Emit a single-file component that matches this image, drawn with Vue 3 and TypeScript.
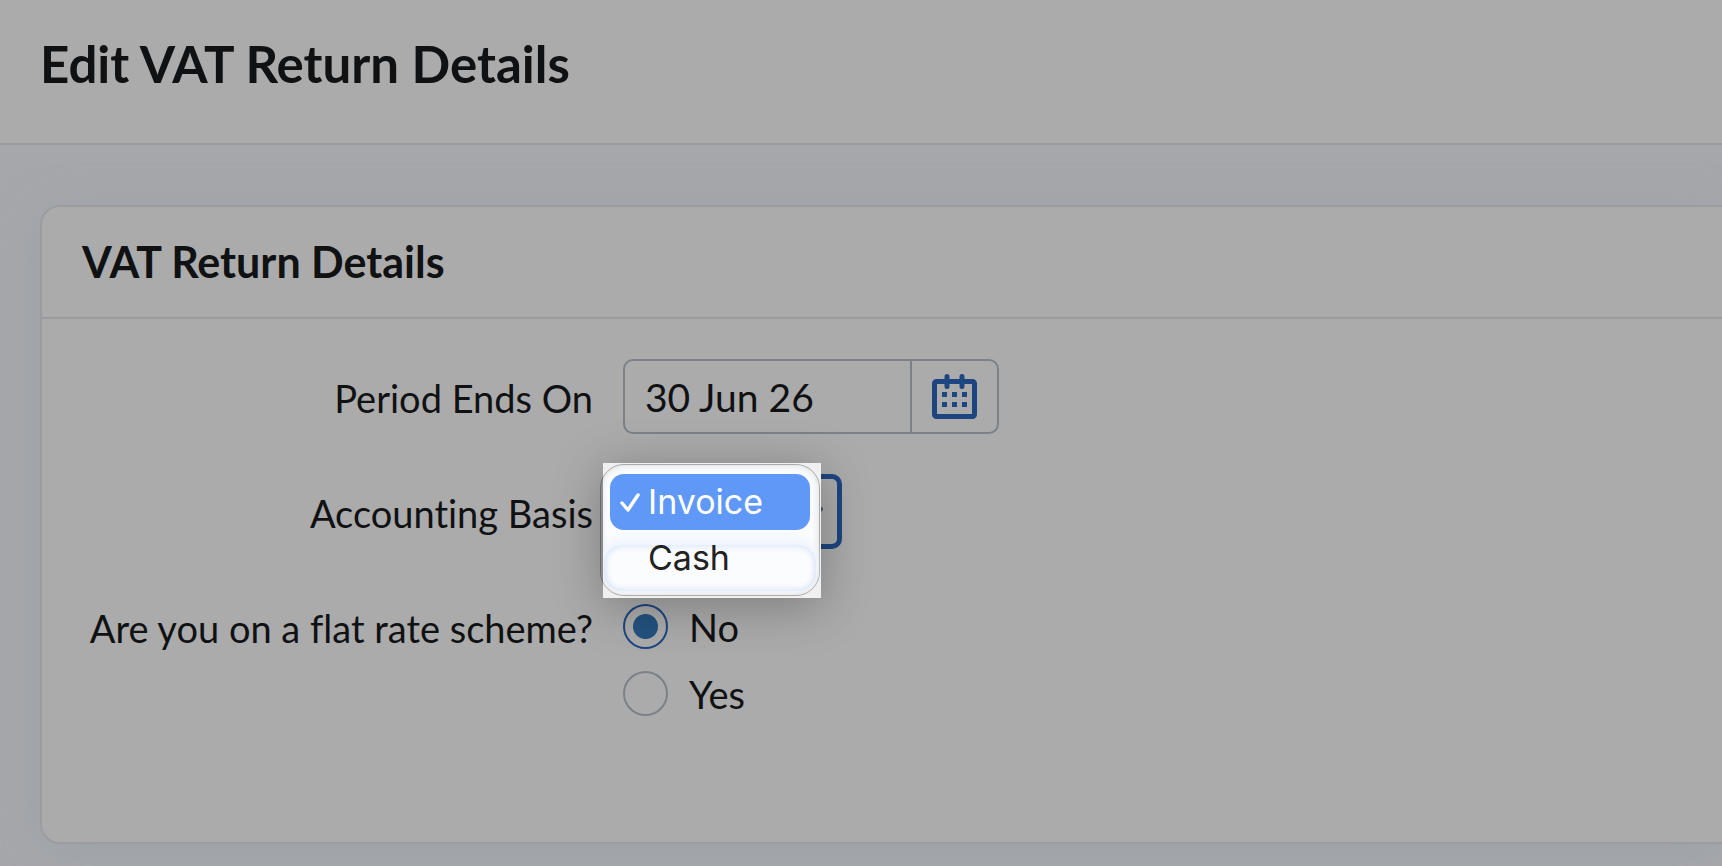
<script setup lang="ts">
import { ref } from 'vue'

type Basis = 'Invoice' | 'Cash'

const bases: Basis[] = ['Invoice', 'Cash']
const periodEnd = ref('30 Jun 26')
const basis = ref<Basis>('Invoice')
const flatRate = ref('No')
const menuOpen = ref(true)

function choose(option: Basis) {
  basis.value = option
  menuOpen.value = false
}
</script>

<template>
  <div class="page">
    <header class="page-header">
      <h1>Edit VAT Return Details</h1>
    </header>

    <main>
      <form class="card" @submit.prevent>
        <div class="card-header">
          <h2>VAT Return Details</h2>
        </div>

        <div class="fields">
          <label class="label" for="period-end">Period Ends On</label>
          <div class="date-field">
            <input id="period-end" v-model="periodEnd" type="text" autocomplete="off" />
            <button class="calendar" type="button" aria-label="Choose date">
              <svg width="45" height="45" viewBox="0 0 45 45" aria-hidden="true">
                <rect x="2.5" y="7.5" width="40" height="35" rx="2" fill="none" stroke="currentColor" stroke-width="5" />
                <path d="M15 2.5v10M30 2.5v10" fill="none" stroke="currentColor" stroke-width="5" stroke-linecap="round" />
                <path d="M10 18h5v5h-5zM20 18h5v5h-5zM30 18h5v5h-5zM10 28h5v5h-5zM20 28h5v5h-5zM30 28h5v5h-5z" fill="currentColor" />
              </svg>
            </button>
          </div>

          <label class="label" for="basis">Accounting Basis</label>
          <div class="select-field" :class="{ open: menuOpen }">
            <select id="basis" v-model="basis" @mousedown.prevent="menuOpen = !menuOpen">
              <option v-for="option in bases" :key="option">{{ option }}</option>
            </select>
            <svg class="chevron" width="26" height="16" viewBox="0 0 26 16" aria-hidden="true">
              <path d="M2 2l11 11L24 2" fill="none" stroke="currentColor" stroke-width="4" stroke-linecap="round" />
            </svg>
            <div v-if="menuOpen" class="spotlight">
              <div class="menu" role="listbox" aria-label="Accounting Basis">
                <button
                  v-for="option in bases"
                  :key="option"
                  type="button"
                  role="option"
                  class="option"
                  :class="{ selected: option === basis }"
                  :aria-selected="option === basis"
                  @click="choose(option)"
                >
                  <svg class="tick" width="20" height="20" viewBox="0 0 20 20" aria-hidden="true">
                    <path v-if="option === basis" d="M2 11l6 7L18 3" fill="none" stroke="currentColor" stroke-width="3.4" stroke-linecap="round" stroke-linejoin="round" />
                  </svg>
                  {{ option }}
                </button>
              </div>
            </div>
          </div>

          <div id="flat-rate" class="label">Are you on a flat rate scheme?</div>
          <div class="radios" role="radiogroup" aria-labelledby="flat-rate">
            <label v-for="answer in ['No', 'Yes']" :key="answer" class="radio">
              <input v-model="flatRate" type="radio" name="flat-rate" :value="answer" />
              <span>{{ answer }}</span>
            </label>
          </div>
        </div>
      </form>
    </main>
  </div>
</template>

<style>
body {
  margin: 0;
  background: #a6a7ab;
}
</style>

<style scoped>
.page {
  min-height: 100vh;
  overflow: hidden;
  color: #101113;
  font-family: Lato, "Liberation Sans", sans-serif;
  font-size: 38px;
  font-variant-ligatures: none;
  line-height: 48px;
}

*,
*::before,
*::after {
  box-sizing: border-box;
}

.page-header {
  padding: 34px 40px 49px;
  background: #ababab;
  border-bottom: 2px solid #9b9ca0;
}

h1,
h2 {
  margin: 0;
  font-weight: 700;
}

h1 {
  font-size: 51px;
  line-height: 60px;
}

h2 {
  font-size: 43px;
  line-height: 50px;
}

main {
  padding: 60px 0 22px 40px;
}

.card {
  background: #ababab;
  border: 2px solid #9b9ca0;
  border-right: 0;
  border-radius: 20px 0 0 20px;
  box-shadow: 0 6px 40px rgba(145, 160, 168, 0.55);
}

.card-header {
  padding: 30px 40px;
  border-bottom: 2px solid #9b9ca0;
}

.fields {
  display: grid;
  grid-template-columns: 511px 1fr;
  column-gap: 30px;
  row-gap: 40px;
  padding: 40px 40px 115px;
}

.label {
  height: 75px;
  line-height: 78px;
  text-align: right;
  white-space: nowrap;
}

.date-field {
  display: flex;
  width: 376px;
  height: 75px;
  border: 2px solid #7b8186;
  border-radius: 10px;
}

input,
select,
button {
  margin: 0;
  color: inherit;
  font: inherit;
}

.date-field input {
  flex: 1;
  min-width: 0;
  padding: 0 20px;
  font-size: 39px;
  background: none;
  border: 0;
  outline: 0;
}

.calendar {
  display: grid;
  place-items: center;
  width: 87px;
  padding: 0;
  color: #1d4681;
  background: none;
  border: 0;
  border-left: 2px solid #7b8186;
}

.select-field {
  position: relative;
  width: 219px;
  height: 75px;
}

/* Dimmed edge of the menu, left of the undimmed area */
.select-field.open::before {
  position: absolute;
  top: -10px;
  left: -23px;
  z-index: 1;
  width: 60px;
  height: 132px;
  background: #a2a2a2;
  border: 1px solid #777;
  border-radius: 24px;
  content: "";
}

select {
  width: 100%;
  height: 100%;
  padding: 0 20px;
  appearance: none;
  background: none;
  border: 5px solid #1d4681;
  border-radius: 10px;
  outline: 0;
}

.chevron {
  position: absolute;
  top: 33px;
  right: 19px;
  color: #4d555c;
}

/* Undimmed area around the open menu */
.spotlight {
  position: absolute;
  top: -11px;
  left: -20px;
  z-index: 1;
  width: 218px;
  overflow: hidden;
  background: #f0f0f0;
  box-shadow: 0 8px 50px rgba(0, 0, 0, 0.28);
}

.menu {
  position: relative;
  display: flex;
  flex-direction: column;
  margin: 1px 1px 2px -3px;
  padding: 9px;
  background: #fbfcfd;
  border: 1px solid #a9a9a9;
  border-radius: 24px;
  box-shadow: inset 0 0 6px 1px #dfe1e3;
}

.menu::before {
  position: absolute;
  right: 3px;
  bottom: 4px;
  left: 3px;
  height: 46px;
  border-radius: 18px;
  box-shadow: inset 0 0 7px 1px #d5e3fa, 0 -5px 12px #edf3fd;
  content: "";
}

.option {
  position: relative;
  display: flex;
  align-items: center;
  gap: 8px;
  height: 56px;
  padding: 0 10px;
  color: #222;
  font-family: Inter, "Liberation Sans", sans-serif;
  font-size: 34px;
  line-height: 56px;
  text-align: left;
  background: none;
  border: 0;
  border-radius: 14px;
}

.option.selected {
  color: #fff;
  background: #6098f8;
}

.radios {
  padding-top: 4px;
}

.radio {
  display: flex;
  align-items: center;
  gap: 21px;
  width: max-content;
  height: 67px;
}

.radio input {
  width: 45px;
  height: 45px;
  appearance: none;
  border: 2px solid #7b8186;
  border-radius: 50%;
}

.radio input:checked {
  border-color: #1d4681;
  background: radial-gradient(circle, #23527f 12px, transparent 13px);
}
</style>
